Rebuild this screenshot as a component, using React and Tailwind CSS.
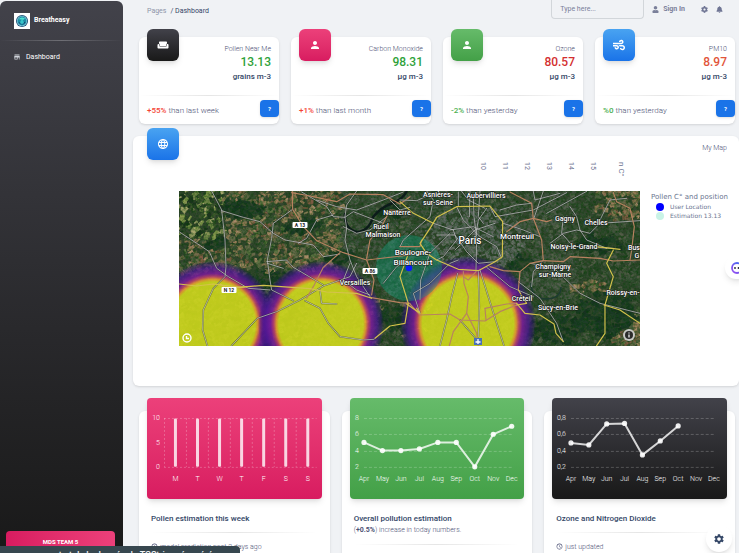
import React from "react";
import { MdWeekend, MdPerson, MdLanguage, MdSettings, MdSchedule, MdStore } from "react-icons/md";
import { FaUser, FaBell, FaWind, FaCog } from "react-icons/fa";

const STATS = [
  { title: "Pollen Near Me", value: "13.13", unit: "grains m-3", color: "text-[#2fa23a]", delta: "+55%", deltaColor: "text-[#f44335]", note: "than last week", Icon: MdWeekend, tile: "from-[#42424a] to-[#191919]" },
  { title: "Carbon Monoxide", value: "98.31", unit: "µg m-3", color: "text-[#2fa23a]", delta: "+1%", deltaColor: "text-[#f44335]", note: "than last month", Icon: MdPerson, tile: "from-[#ec407a] to-[#d81b60]" },
  { title: "Ozone", value: "80.57", unit: "µg m-3", color: "text-[#d32f2f]", delta: "-2%", deltaColor: "text-[#4caf50]", note: "than yesterday", Icon: MdPerson, tile: "from-[#66bb6a] to-[#43a047]" },
  { title: "PM10", value: "8.97", unit: "µg m-3", color: "text-[#e2553a]", delta: "%0", deltaColor: "text-[#4caf50]", note: "than yesterday", Icon: FaWind, tile: "from-[#49a3f1] to-[#1a73e8]" },
];

function Rule({ dark = false }) {
  return (
    <hr
      className={
        dark
          ? "h-px border-0 bg-linear-to-r from-transparent via-white/25 to-transparent"
          : "h-px border-0 bg-linear-to-r from-transparent via-black/10 to-transparent"
      }
    />
  );
}

function Logo() {
  return (
    <svg viewBox="0 0 16 16" className="h-4 w-4 bg-white" aria-hidden="true">
      <circle cx="8" cy="8" r="6" fill="#1d4d73" />
      <circle cx="8" cy="8" r="5.2" fill="#7fc4d6" />
      <circle cx="8" cy="8" r="4.4" fill="#1c8fa6" />
      <path d="M4.500 6.500Q7 3 11 5.500L9 7Q6 6 4.500 6.500Z" fill="#4fe0d2" />
      <path d="M4.500 10Q8 7 11.500 9.500Q9 13 4.500 10Z" fill="#174a78" />
      <path d="M8 6l2 3a2 2 0 1 1-4 0Z" fill="#37c5c9" />
    </svg>
  );
}

function Sidebar() {
  return (
    <aside className="mt-px flex w-[123px] shrink-0 flex-col rounded-t-md bg-linear-to-b from-[#42424a] to-[#191919] text-white">
      <a href="#home" className="flex h-[39px] items-center gap-1 px-3.5 text-[7px] font-bold">
        <Logo />
        <span>Breatheasy</span>
      </a>
      <Rule dark />
      <a href="#dashboard" className="mt-2.5 flex h-3 items-center gap-1.5 px-3.5 text-[7px]">
        <MdStore className="h-1.5 w-1.5 scale-125 text-gray-300" />
        <span>Dashboard</span>
      </a>
      <button className="mt-auto mr-2 mb-0.5 ml-1.5 h-5 rounded-sm bg-linear-to-l from-[#ec407a] to-[#d81b60] text-center text-[6px] font-bold">
        MDS TEAM 5
      </button>
    </aside>
  );
}

function Header() {
  return (
    <header className="flex h-[19px] items-center pr-3 pl-2 text-[7px]">
      <nav className="flex gap-1 pt-1" aria-label="Breadcrumb">
        <a href="#pages" className="text-[#8e94a8]">Pages</a>
        <span className="text-[#344767]">/ Dashboard</span>
      </nav>
      <input
        aria-label="Search"
        placeholder="Type here..."
        className="ml-auto h-[19px] w-[93px] rounded-b-sm border border-t-0 border-[#d2d6da] px-2 text-[#7b809a] placeholder:text-[#7b809a]"
      />
      <a href="#signin" className="ml-2 flex items-center gap-1 font-bold text-[#7b809a]">
        <FaUser className="h-[7px] w-[7px]" />
        Sign In
      </a>
      <button aria-label="Settings" className="ml-4 text-[#6f7594]">
        <FaCog className="h-[7px] w-[7px]" />
      </button>
      <button aria-label="Notifications" className="ml-2 text-[#6f7594]">
        <FaBell className="h-[7px] w-[7px]" />
      </button>
    </header>
  );
}

function IconTile({ Icon, tile }) {
  return (
    <div className={`flex h-8 w-8 items-center justify-center rounded-md bg-linear-to-b text-white shadow-md ${tile}`}>
      <Icon className="h-3 w-3" />
    </div>
  );
}

function StatCard({ title, value, unit, color, delta, deltaColor, note, Icon, tile }) {
  return (
    <section className="rounded-md bg-white shadow">
      <div className="flex h-[58px] justify-between px-2">
        <div className="-mt-2">
          <IconTile Icon={Icon} tile={tile} />
        </div>
        <div className="pt-[7px] text-right">
          <p className="text-[7px] leading-[10px] font-light text-[#4c5175]">{title}</p>
          <p className={`text-[12px] leading-4 font-medium ${color}`}>{value}</p>
          <p className="text-[8px] leading-[14px] font-medium text-[#344767]">{unit}</p>
        </div>
      </div>
      <Rule />
      <div className="flex h-7 items-start justify-between pt-1 pl-2">
        <p className="pt-[5px] text-[8px] leading-3 font-light text-[#4c5175]">
          <span className={`font-medium ${deltaColor}`}>{delta}</span> {note}
        </p>
        <button className="h-[17px] w-[19px] rounded-sm bg-[#1a73e8] text-[6px] font-bold text-white shadow-sm" aria-label={`About ${title}`}>
          ?
        </button>
      </div>
    </section>
  );
}

/* ---- satellite map ---- */

function makeRandom(seed) {
  let s = seed;
  return () => {
    s = (s * 16807) % 2147483647;
    return s / 2147483647;
  };
}

const FOREST = ["#1a3824", "#1f3d27", "#1d3828", "#24412b", "#183222"];
const FIELDS = ["#9a7c5a", "#86704f", "#74694a", "#5a6343", "#4c5d3e", "#a88a68", "#5c7042", "#7d5a43", "#3a5034", "#66694a"];
const LIME = ["#8a9a50", "#2a4025", "#1e3320", "#6f8446", "#a5a46c", "#3f552f"];
const URBAN = ["#515b4d", "#4a5647", "#59624f", "#445241", "#525d4e", "#3f5040"];
const CITY = ["#626963", "#696f68", "#5b635e", "#606862", "#565f59"];
const EAST = ["#3a4f38", "#43543f", "#32492f", "#4c5744", "#2b4429", "#535b48"];

const inside = (x, y, cx, cy, rx, ry) => ((x - cx) / rx) ** 2 + ((y - cy) / ry) ** 2 < 1;

function paletteAt(x, y) {
  if (inside(x, y, 292, 48, 52, 32)) return CITY;
  if (x < 42 && y < 48) return LIME;
  if (
    inside(x, y, 60, 18, 24, 10) || inside(x, y, 122, 34, 20, 9) || inside(x, y, 35, 52, 12, 8) ||
    inside(x, y, 86, 88, 34, 9) || inside(x, y, 215, 128, 20, 14) || inside(x, y, 160, 66, 18, 7) ||
    inside(x, y, 425, 122, 30, 22) || inside(x, y, 375, 138, 30, 14) || inside(x, y, 338, 70, 13, 9) ||
    inside(x, y, 418, 52, 24, 9) || inside(x, y, 210, 20, 16, 6)
  ) return FOREST;
  if (inside(x, y, 440, 8, 28, 22) || inside(x, y, 408, 98, 20, 10) || (x > 430 && y > 118)) return FIELDS;
  if (x > 395 || (x > 350 && y > 105)) return EAST;
  if (x < 160 && y < 82) return FIELDS;
  if (x < 125) return [...FOREST, ...URBAN];
  if (x > 185 && x < 250 && y > 100) return [...EAST, "#8a7a50"];
  return [...URBAN, ...EAST.slice(0, 2)];
}

const PATCHES = (() => {
  const rnd = makeRandom(4711);
  const out = [];
  for (let i = 0; i < 6000; i += 1) {
    const x = rnd() * 470 - 4;
    const y = rnd() * 163 - 4;
    const p = paletteAt(x, y);
    out.push({ x, y, w: 2 + rnd() * 5, h: 1.5 + rnd() * 3.5, a: rnd() * 70 - 60, c: p[Math.floor(rnd() * p.length)] });
  }
  return out;
})();

const WEST = {
  orange: [
    "M367 33L368 88L400 140L440 182L520 218L590 240L612 300L605 345",
    "M510 218L460 262L430 320L410 355",
    "M365 38L420 48L500 65L540 42L640 44L690 72L720 50",
    "M590 240L720 225",
    "M590 235L600 180L640 130L660 90L720 95",
    "M600 352L690 368L720 370",
  ],
  yellow: [
    "M27 312L80 318L130 312L210 322L280 316L420 326L470 336L560 340L605 355",
    "M615 475L660 438L705 430L715 370L690 290L712 230",
    "M150 312L170 325L230 320",
  ],
  white: [
    "M125 33L155 90L165 180L168 260L165 290L130 325L100 390L98 450L112 497",
    "M27 155L80 190L118 215L140 265L175 290L235 325L300 330",
    "M155 92L220 112L270 125L310 160L345 180L430 195L460 230L510 222",
    "M365 90L310 130L305 175L292 240L300 300L305 330L370 362",
    "M395 36L470 80L490 110L525 112L550 95L640 130",
    "M185 497L262 415L320 395L390 360L460 318L540 290L560 250",
    "M405 362L450 385L475 430L510 470L580 480L612 478",
    "M290 245L350 240L370 262L460 315",
    "M525 112L530 145L525 180L540 240L560 290L600 350",
    "M440 60L500 80L560 90L640 60L700 36",
    "M385 190L410 175L440 120L490 105",
    "M640 310L680 260L715 240", "M340 265L292 250", "M450 330L455 370L500 372",
    "M520 140L560 160L600 150L650 110", "M560 33L530 75L525 110",
    "M600 345L560 330L520 300L540 250", "M660 60L690 90L720 82",
  ],
};

const EASTERN = {
  orange: [
    "M330 36L395 70L400 115L425 180L430 242L390 250L360 275L355 330",
    "M320 155L360 125L400 115L440 125L455 120",
    "M430 242L490 245L510 230L600 235L640 243L720 240",
    "M640 38L650 65L690 85L703 140L695 210L690 240",
    "M270 260L310 272L360 275",
    "M190 275L192 310L205 350L200 400L160 455L148 497",
    "M200 400L230 460L235 497", "M228 275L205 300L190 290",
    "M30 372L60 405L150 402L180 420L255 423L300 395L350 375",
    "M255 385L258 420", "M255 385L320 372L350 370",
    "M0 200L60 200L65 180",
  ],
  yellow: [
    "M60 190L90 145L110 112L170 80L270 78L308 125L307 230L285 245L235 272L175 268L110 240L80 220L60 190",
    "M350 370L375 400L420 405L462 432L468 460L490 485",
    "M590 200L660 208", "M640 210L620 250L640 290L615 375L615 460L590 497",
    "M612 375L660 390L720 430", "M0 65L40 100L100 130", "M355 330L380 370L350 375",
    "M20 372L60 400L50 385",
  ],
  white: [
    "M173 280L155 350L140 420L120 497", "M235 275L238 380L235 470",
    "M240 270L265 350L290 430L312 497", "M260 262L330 320L400 350",
    "M220 50L222 110L230 170L228 270", "M185 34L205 60L255 85", "M100 130L160 150L170 180L130 230L110 240",
    "M110 165L165 165L200 215L235 250L285 245", "M165 210L225 150L285 130", "M270 80L285 110L400 90L500 38",
    "M395 70L350 75L300 90", "M310 130L370 150L420 170", "M390 250L460 262L540 340L600 370L720 400",
    "M450 190L490 160L530 150L570 160L600 130L720 122", "M490 110L485 160L520 200L640 205",
    "M600 120L630 60L680 55", "M355 305L420 355L470 430L490 485", "M80 33L100 60L90 110L10 180L0 200",
    "M60 400L40 340L90 310L150 250L175 240", "M240 170L290 200L305 235", "M150 150L220 140L280 170",
    "M400 120L430 33", "M430 240L400 275L395 320", "M560 34L440 100",
    "M170 80L190 120L240 170", "M260 85L235 120L225 180",
    "M0 60L50 62L100 40", "M175 36L175 80", "M210 33L208 110", "M240 33L235 110L250 130",
    "M510 80L530 110L540 150", "M620 205L560 180L540 150", "M400 34L405 60L450 48L480 40",
    "M180 420L240 490", "M60 360L62 300L90 220L150 160",
  ],
};

function Roads({ set, transform }) {
  return (
    <g transform={transform} fill="none" strokeLinejoin="round" strokeLinecap="round">
      {set.white.map((d) => <path key={`b${d}`} d={d} stroke="#1f2522" strokeWidth="5" opacity="0.5" />)}
      {set.white.map((d) => <path key={d} d={d} stroke="#c9ccca" strokeWidth="2.5" opacity="0.85" />)}
      {set.orange.map((d) => <path key={d} d={d} stroke="#b88260" strokeWidth="3.5" />)}
      {set.yellow.map((d) => <path key={d} d={d} stroke="#d4c24c" strokeWidth="3.5" />)}
    </g>
  );
}

const PLACES = [
  ["Asnières-", 259, 6, 7], ["sur-Seine", 259, 14, 7], ["Aubervilliers", 307, 7, 7], ["Nanterre", 218, 24, 7],
  ["Rueil", 202, 38, 7], ["Malmaison", 204, 46, 7], ["Boulogne-", 234, 64, 8], ["Billancourt", 234, 74, 8],
  ["Paris", 291, 53, 10], ["Montreuil", 338, 48, 8], ["Gagny", 386, 30, 7], ["Chelles", 417, 34, 7],
  ["Noisy-le-Grand", 395, 58, 7], ["Champigny", 374, 78, 7], ["sur-Marne", 376, 86, 7], ["Créteil", 343, 110, 7],
  ["Sucy-en-Brie", 379, 119, 7], ["Roissy-en-", 444, 104, 7], ["Bus", 455, 59, 7], ["G", 458, 67, 7], ["Versailles", 176, 94, 7],
];

const SHIELDS = [["A 13", 121, 34], ["A 86", 191, 80], ["N 12", 50, 99]];

function MapView() {
  return (
    <svg viewBox="0 0 461 155" preserveAspectRatio="xMidYMid slice" className="h-[155px] min-w-0 flex-1" role="img" aria-label="Pollen map">
      <defs>
        <radialGradient id="heat">
          <stop offset="0" stopColor="#d8e01c" stopOpacity="0.86" />
          <stop offset="0.67" stopColor="#d8e01c" stopOpacity="0.86" />
          <stop offset="0.71" stopColor="#f0a030" stopOpacity="0.86" />
          <stop offset="0.75" stopColor="#c8436c" stopOpacity="0.84" />
          <stop offset="0.8" stopColor="#7d1a9c" stopOpacity="0.84" />
          <stop offset="0.89" stopColor="#4d1596" stopOpacity="0.75" />
          <stop offset="0.96" stopColor="#351080" stopOpacity="0.4" />
          <stop offset="1" stopColor="#250d80" stopOpacity="0" />
        </radialGradient>
        <filter id="grain" x="0" y="0" width="100%" height="100%">
          <feTurbulence type="fractalNoise" baseFrequency="0.4" numOctaves="2" seed="7" />
          <feColorMatrix values="0 0 0 0 0  0 0 0 0 0.05  0 0 0 0 0  1.200 0 0 0 -0.42" />
        </filter>
      </defs>
      <rect width="461" height="155" fill="#34452f" />
      {PATCHES.map((p, i) => (
        <rect key={i} x={p.x} y={p.y} width={p.w} height={p.h} fill={p.c} transform={`rotate(${p.a} ${p.x} ${p.y})`} />
      ))}
      <rect width="461" height="155" filter="url(#grain)" />
      <path d="M166 22Q165 38 178 41Q190 40 194 26Q202 16 214 12Q224 8 228 0" fill="none" stroke="#0c1c1a" strokeWidth="2.500" />
      <path d="M352 92Q352 107 366 108Q382 108 382 96" fill="none" stroke="#1d3b30" strokeWidth="1.500" />
      <circle cx="34" cy="133" r="63" fill="url(#heat)" />
      <circle cx="142" cy="133" r="63" fill="url(#heat)" />
      <circle cx="289" cy="133" r="68" fill="url(#heat)" />
      <circle cx="230" cy="77" r="33" fill="#0f9b78" opacity="0.42" />
      <Roads set={WEST} transform="translate(-9 -11) scale(0.3333)" />
      <Roads set={EASTERN} transform="translate(221 -11) scale(0.3333)" />
      <circle cx="230" cy="77" r="3.300" fill="#0a1cf5" />
      <g fontFamily="Roboto, sans-serif" fontWeight="500" textAnchor="middle" fill="#fff" stroke="#1a1f1a" strokeWidth="1.200" paintOrder="stroke">
        {PLACES.map(([name, x, y, size]) => (
          <text key={name} x={x} y={y} fontSize={size}>{name}</text>
        ))}
      </g>
      {SHIELDS.map(([name, x, y]) => (
        <g key={name}>
          <rect x={x - 7.5} y={y - 3} width="15" height="6" rx="1" fill="#fff" />
          <text x={x} y={y + 2} fontSize="5" fontWeight="700" textAnchor="middle" fill="#222">{name}</text>
        </g>
      ))}
      <rect x="295" y="147" width="8" height="7" fill="#4a6fb8" />
      <path d="M299 148v5M296.500 151h5" stroke="#fff" strokeWidth="1.300" />
      <g fill="none" stroke="#fff">
        <circle cx="8" cy="147" r="4" strokeWidth="1.400" />
        <path d="M7.500 145v2.500h2.500" strokeWidth="1.400" />
      </g>
      <circle cx="450" cy="144" r="6" fill="#c9cac6" />
      <circle cx="450" cy="144" r="4" fill="#2b2b2b" />
      <path d="M450 143.500v3M450 141.500v1" stroke="#fff" strokeWidth="1.200" />
    </svg>
  );
}

function MapCard() {
  return (
    <section className="mt-3 -mr-1 -ml-1.5 h-[250px] rounded-md bg-white shadow">
      <div className="flex h-6 justify-between pr-3 pl-3.5">
        <div className="-mt-2">
          <IconTile Icon={MdLanguage} tile="from-[#49a3f1] to-[#1a73e8]" />
        </div>
        <p className="pt-[7px] text-[7px] font-light text-[#4c5175]">My Map</p>
      </div>
      <div className="flex h-[31px] justify-end pt-0.5 pr-[107px] text-[7px] text-[#6c7290]">
        {["10", "11", "12", "13", "14", "15"].map((t) => (
          <span key={t} className="w-[22px] leading-[22px] [writing-mode:vertical-rl]">{t}</span>
        ))}
        <span className="ml-1.5 w-[22px] text-[8px] leading-[22px] [writing-mode:vertical-rl]">n C°</span>
      </div>
      <div className="flex pl-[46px]">
        <MapView />
        <div className="w-[99px] pl-[11px] font-['DejaVu_Sans',sans-serif] text-[6px] text-[#6a7590]">
          <p className="pt-0.5 text-[7px] leading-[9px] whitespace-nowrap">Pollen C° and position</p>
          <ul className="pl-[5px] leading-[9px]">
            <li className="flex items-center gap-1.5 whitespace-nowrap">
              <span className="h-2 w-2 rounded-full bg-[#0000ff]" />User Location
            </li>
            <li className="flex items-center gap-1.5 whitespace-nowrap">
              <span className="h-2 w-2 rounded-full bg-[#c9f3e6]" />Estimation 13.13
            </li>
          </ul>
        </div>
      </div>
    </section>
  );
}

/* ---- charts ---- */

const MONTHS = ["Apr", "May", "Jun", "Jul", "Aug", "Sep", "Oct", "Nov", "Dec"];
const TICK_Y = [20, 36, 53, 69];

function BarChart() {
  return (
    <svg viewBox="0 0 175 101" className="block w-full" role="img" aria-label="Pollen per weekday" fill="#fff" fontSize="7" fontWeight="300">
      <g stroke="#fff" strokeOpacity="0.25" strokeDasharray="2 2" fill="none">
        <path d="M17 20.500H170M17 69.500H170" />
        {[0, 1, 2, 3, 4, 5, 6].map((i) => <path key={i} d={`M${17.5 + i * 22} 20V69`} />)}
      </g>
      <g textAnchor="end">
        <text x="13" y="22">10</text>
        <text x="13" y="47">5</text>
        <text x="13" y="71">0</text>
      </g>
      {["M", "T", "W", "T", "F", "S", "S"].map((d, i) => (
        <g key={i}>
          <rect x={27 + i * 22.1} y="20.500" width="3" height="48.500" rx="1" opacity="0.8" />
          <text x={28.5 + i * 22.1} y="83" textAnchor="middle">{d}</text>
        </g>
      ))}
    </svg>
  );
}

function LineChart({ ticks, x0, step, ys, label }) {
  return (
    <svg viewBox="0 0 175 101" className="block w-full" role="img" aria-label={label} fill="#fff" fontSize="7" fontWeight="300">
      {TICK_Y.map((y, i) => (
        <g key={y}>
          <path d={`M${x0} ${y + 0.5}H162`} stroke="#fff" strokeOpacity="0.22" strokeDasharray="3 2" />
          <text x={x0 - 5} y={y + 2} textAnchor="end">{ticks[i]}</text>
        </g>
      ))}
      {MONTHS.map((m, i) => (
        <text key={m} x={x0 + i * step} y="83" textAnchor="middle">{m}</text>
      ))}
      <polyline points={ys.map((y, i) => `${x0 + i * step},${y}`).join(" ")} fill="none" stroke="#fff" strokeOpacity="0.8" strokeWidth="2" />
      {ys.map((y, i) => <circle key={i} cx={x0 + i * step} cy={y} r="2.600" opacity="0.9" />)}
    </svg>
  );
}

function ChartCard({ title, subtitle, footer, tile, children }) {
  return (
    <section className="rounded-md bg-white shadow-sm">
      <div className={`mx-2 -mt-[13px] rounded-sm bg-linear-to-b shadow-md ${tile}`}>{children}</div>
      <div className="px-3 pt-[15px] pb-3">
        <h2 className="text-[8px] leading-[10px] font-medium text-[#344767]">{title}</h2>
        {subtitle && <p className="text-[7px] leading-3 font-light text-[#4c5175]">{subtitle}</p>}
        <div className="pt-2">
          <Rule />
        </div>
        {footer && (
          <p className="flex items-center gap-0.5 pt-2 text-[7px] leading-3 font-light text-[#4c5175]">
            <MdSchedule className="h-[7px] w-[7px]" />
            {footer}
          </p>
        )}
      </div>
    </section>
  );
}

export default function App() {
  return (
    <div className="flex h-screen overflow-hidden bg-[#f0f2f5] font-[Roboto,sans-serif]">
      <Sidebar />
      <main className="min-w-0 flex-1 overflow-hidden pr-1 pl-4">
        <Header />
        <div className="mt-[18px] grid grid-cols-4 gap-3">
          {STATS.map((s) => <StatCard key={s.title} {...s} />)}
        </div>
        <MapCard />
        <div className="mt-[25px] grid grid-cols-3 gap-3">
          <ChartCard title="Pollen estimation this week" footer="model prediction past 2 days ago" tile="from-[#ec407a] to-[#d81b60]">
            <BarChart />
          </ChartCard>
          <ChartCard
            title="Overall pollution estimation"
            subtitle={<>(<b className="font-bold">+0.5%</b>) increase in today numbers.</>}
            tile="from-[#66bb6a] to-[#43a047]"
          >
            <LineChart label="Overall pollution" ticks={["8", "6", "4", "2"]} x0={14} step={18.5} ys={[44.5, 52.7, 52.7, 51, 44.5, 44.5, 69, 36.3, 28.3]} />
          </ChartCard>
          <ChartCard title="Ozone and Nitrogen Dioxide" footer="just updated" tile="from-[#42424a] to-[#191919]">
            <LineChart label="Ozone and nitrogen dioxide" ticks={["0,8", "0,6", "0,4", "0,2"]} x0={19} step={17.9} ys={[45, 47, 26, 25.5, 57, 43, 28]} />
          </ChartCard>
        </div>
      </main>

      <button aria-label="Open chat" className="fixed top-[257px] -right-2.5 flex h-[22px] w-6 items-center justify-center rounded-full bg-white shadow-md">
        <svg viewBox="0 0 12 12" className="h-3 w-3" aria-hidden="true">
          <defs>
            <linearGradient id="chat" x1="0" y1="1" x2="1" y2="0">
              <stop offset="0" stopColor="#9b4df0" />
              <stop offset="1" stopColor="#3a6bf0" />
            </linearGradient>
          </defs>
          <circle cx="6" cy="6" r="5" fill="#fff" stroke="url(#chat)" strokeWidth="1.800" />
          <circle cx="4" cy="6" r="0.900" fill="#223" />
          <circle cx="7.500" cy="6" r="0.900" fill="#223" />
        </svg>
      </button>
      <button aria-label="Configure" className="fixed right-[7px] bottom-px flex h-[26px] w-[26px] items-center justify-center rounded-full bg-white text-[#344767] shadow-md">
        <MdSettings className="h-3 w-3" />
      </button>
      <div className="fixed bottom-0 left-0 h-[7px] w-60 overflow-hidden rounded-tr-sm bg-[#37474f] pl-4 text-[9px] leading-[18px] font-medium whitespace-nowrap text-gray-100">
        un moment et de la donnée de TCString récupérée
      </div>
    </div>
  );
}
